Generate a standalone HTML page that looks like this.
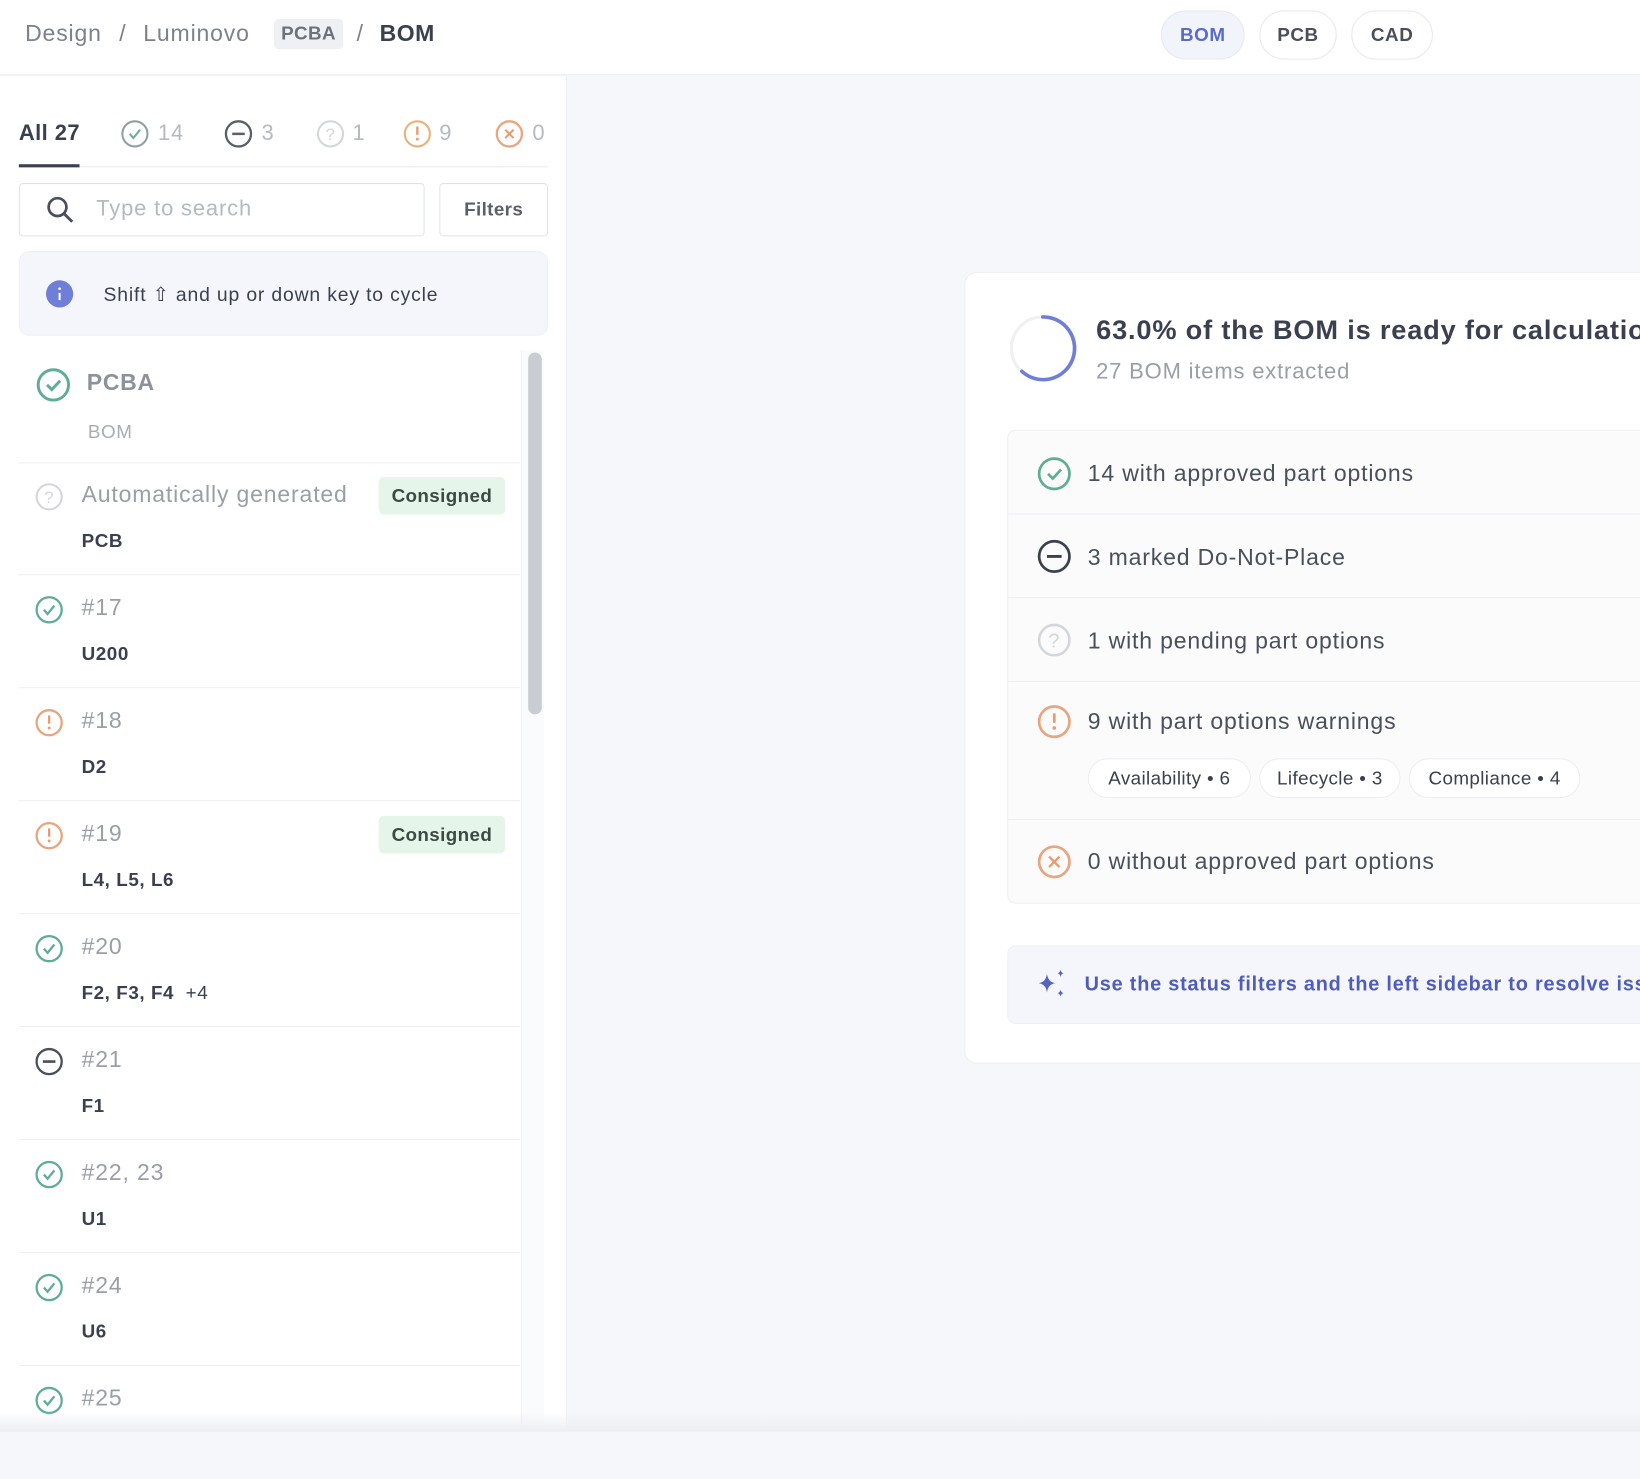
<!DOCTYPE html>
<html><head><meta charset="utf-8"><style>
*{margin:0;padding:0;box-sizing:border-box}
html,body{width:1640px;height:1432px;overflow:hidden;background:#f5f7fb;font-family:"Liberation Sans",sans-serif;letter-spacing:0.05em}
#w{position:absolute;left:0;top:0;width:1568px;height:1369px;transform:scale(1.04592);transform-origin:0 0;background:#f5f7fb}
.a{position:absolute;white-space:nowrap}
.hdr{position:absolute;left:0;top:0;width:1568px;height:72px;background:#fff;border-bottom:1px solid #e9ecf2}
.pill{position:absolute;top:10px;height:47px;border:1px solid #e6e9ef;border-radius:24px;font-size:18px;font-weight:bold;color:#4a4f5c;text-align:center;line-height:45px;background:#fff;letter-spacing:0.03em}
.left{position:absolute;left:0;top:73px;width:542px;height:1296px;background:#fff;border-right:1px solid #eceef3}
.row{position:absolute;left:18px;width:479px;height:108px;border-bottom:1px solid #eef0f4}
.row svg{position:absolute;left:15px;top:19px}
.t{position:absolute;left:60px;top:18px;font-size:22px;color:#9a9ea8}
.s{position:absolute;left:60px;top:65px;font-size:18px;font-weight:bold;color:#3b4050;letter-spacing:0.03em}
.cons{position:absolute;left:344px;top:14px;width:121px;height:36px;background:#e6f5e9;border-radius:5px;font-size:18px;font-weight:bold;color:#3d4a44;text-align:center;line-height:36px;letter-spacing:0.02em}
.ir{position:absolute;left:0;width:100%;border-bottom:1px solid #eceef2}
.ir svg{position:absolute;left:27px}
.it{position:absolute;left:76px;font-size:22px;color:#4a4f5c}
.chip{position:absolute;top:0;height:38px;border:1px solid #eceef2;border-radius:19px;background:#fff;font-size:18px;color:#3b4050;line-height:36px;text-align:center;letter-spacing:0.02em}
</style></head><body><div id="w">
<div class="hdr">
 <div class="a" style="left:24px;top:19px;font-size:22px;color:#7d818d">Design</div>
 <div class="a" style="left:114px;top:19px;font-size:22px;color:#7d818d">/</div>
 <div class="a" style="left:137px;top:19px;font-size:22px;color:#7d818d">Luminovo</div>
 <div class="a" style="left:262px;top:18px;width:66px;height:29px;background:#eef0f3;border-radius:4px;font-size:18px;font-weight:bold;color:#6d717c;text-align:center;line-height:29px;letter-spacing:0.02em">PCBA</div>
 <div class="a" style="left:341px;top:19px;font-size:22px;color:#7d818d">/</div>
 <div class="a" style="left:363px;top:19px;font-size:22px;color:#3b4050;font-weight:bold;letter-spacing:0.02em">BOM</div>
 <div class="pill" style="left:1110px;width:80px;background:#f1f4fa;color:#5a6ac8">BOM</div>
 <div class="pill" style="left:1204px;width:74px">PCB</div>
 <div class="pill" style="left:1292px;width:78px">CAD</div>
</div>
<div class="left">
 <div class="a" style="left:18px;top:43px;font-size:21px;font-weight:bold;color:#3b4050;letter-spacing:0.02em">All 27</div>
 <svg class="a" style="left:115px;top:41px" width="28" height="28" viewBox="-14 -14 28 28"><circle r="12" fill="none" stroke="#8fa2a0" stroke-width="2"/><path d="M-5 0l3.5 4 6.5-8" fill="none" stroke="#6fae97" stroke-width="2"/></svg>
 <div class="a" style="left:151px;top:43px;font-size:21px;color:#b5b9c1">14</div>
 <svg class="a" style="left:214px;top:41px" width="28" height="28" viewBox="-14 -14 28 28"><circle r="12" fill="none" stroke="#5a5f6b" stroke-width="2.2"/><path d="M-6 0h12" stroke="#5a5f6b" stroke-width="2.5"/></svg>
 <div class="a" style="left:250px;top:43px;font-size:21px;color:#b5b9c1">3</div>
 <svg class="a" style="left:302px;top:41px" width="28" height="28" viewBox="-14 -14 28 28"><circle r="12" fill="none" stroke="#d3d6db" stroke-width="2"/><text x="0" y="6" font-size="16" text-anchor="middle" fill="#d3d6db" font-family="Liberation Sans">?</text></svg>
 <div class="a" style="left:337px;top:43px;font-size:21px;color:#b5b9c1">1</div>
 <svg class="a" style="left:385px;top:41px" width="28" height="28" viewBox="-14 -14 28 28"><circle r="12" fill="none" stroke="#e9b27a" stroke-width="2"/><path d="M0-7v8" stroke="#e99a6f" stroke-width="2.2"/><circle cy="5" r="1.4" fill="#e99a6f"/></svg>
 <div class="a" style="left:420px;top:43px;font-size:21px;color:#b5b9c1">9</div>
 <svg class="a" style="left:473px;top:41px" width="28" height="28" viewBox="-14 -14 28 28"><circle r="12" fill="none" stroke="#e9a57f" stroke-width="2.2"/><path d="M-4-4l8 8M4-4l-8 8" stroke="#e99a6f" stroke-width="2"/></svg>
 <div class="a" style="left:509px;top:43px;font-size:21px;color:#b5b9c1">0</div>
 <div class="a" style="left:18px;top:86px;width:506px;height:1px;background:#e9ecf2"></div>
 <div class="a" style="left:18px;top:84px;width:58px;height:3px;background:#3b4050"></div>
 <div class="a" style="left:18px;top:102px;width:388px;height:51px;border:1px solid #dfe3ea;border-radius:4px"></div>
 <svg class="a" style="left:43px;top:113px" width="30" height="30" viewBox="0 0 30 30"><circle cx="12" cy="12" r="8.5" fill="none" stroke="#4a4f5c" stroke-width="2.6"/><path d="M18 18l8 8" stroke="#4a4f5c" stroke-width="2.8"/></svg>
 <div class="a" style="left:92px;top:115px;font-size:21px;color:#b5b9c1">Type to search</div>
 <div class="a" style="left:420px;top:102px;width:104px;height:51px;border:1px solid #dfe3ea;border-radius:4px;font-size:18px;font-weight:bold;color:#5a5f6b;text-align:center;line-height:49px;letter-spacing:0.02em">Filters</div>
 <div class="a" style="left:18px;top:167px;width:506px;height:81px;background:#f4f6fb;border:1px solid #eef0f5;border-radius:10px"></div>
 <svg class="a" style="left:43px;top:194px" width="28" height="28" viewBox="-14 -14 28 28"><circle r="13" fill="#6f7fd8"/><path d="M0-1v7" stroke="#fff" stroke-width="2"/><circle cy="-5" r="1.3" fill="#fff"/></svg>
 <div class="a" style="left:99px;top:198px;font-size:18.5px;color:#3b4050">Shift ⇧ and up or down key to cycle</div>
 <div class="a" style="left:498px;top:262px;width:22px;height:1034px;background:#fafbfc;border-left:1px solid #eef0f3"></div>
 <div class="a" style="left:505px;top:264px;width:13px;height:346px;background:#c9ccd1;border-radius:7px"></div>
 <div style="position:absolute;left:0;top:262px">
  <div class="row" style="top:0">
   <svg style="left:16px;top:16px" width="34" height="34" viewBox="-17 -17 34 34"><circle r="14.5" fill="none" stroke="#5fae93" stroke-width="2.8"/><path d="M-6 0l4.5 4.5 8-8.5" fill="none" stroke="#5fae93" stroke-width="2.8"/></svg>
   <div class="t" style="left:65px;top:18px;font-weight:bold;color:#8d919c;letter-spacing:0.03em">PCBA</div>
   <div class="s" style="left:66px;top:68px;font-weight:normal;color:#a8acb5">BOM</div>
  </div>
  <div class="row" style="top:107px;height:108px">
   <svg width="28" height="28" viewBox="-14 -14 28 28"><circle r="12" fill="none" stroke="#d3d6db" stroke-width="2"/><text x="0" y="6" font-size="16" text-anchor="middle" fill="#d3d6db" font-family="Liberation Sans">?</text></svg>
   <div class="t">Automatically generated</div><div class="cons">Consigned</div>
   <div class="s">PCB</div>
  </div>
  <div class="row" style="top:215px">
   <svg width="28" height="28" viewBox="-14 -14 28 28"><circle r="12" fill="none" stroke="#5fae93" stroke-width="2.2"/><path d="M-5 0l3.5 4 6.5-8" fill="none" stroke="#5fae93" stroke-width="2.2"/></svg>
   <div class="t">#17</div><div class="s">U200</div>
  </div>
  <div class="row" style="top:323px">
   <svg width="28" height="28" viewBox="-14 -14 28 28"><circle r="12" fill="none" stroke="#e9a57f" stroke-width="2.2"/><path d="M0-7v8" stroke="#e99a6f" stroke-width="2.2"/><circle cy="5" r="1.4" fill="#e99a6f"/></svg>
   <div class="t">#18</div><div class="s">D2</div>
  </div>
  <div class="row" style="top:431px">
   <svg width="28" height="28" viewBox="-14 -14 28 28"><circle r="12" fill="none" stroke="#e9a57f" stroke-width="2.2"/><path d="M0-7v8" stroke="#e99a6f" stroke-width="2.2"/><circle cy="5" r="1.4" fill="#e99a6f"/></svg>
   <div class="t">#19</div><div class="cons">Consigned</div><div class="s">L4, L5, L6</div>
  </div>
  <div class="row" style="top:539px">
   <svg width="28" height="28" viewBox="-14 -14 28 28"><circle r="12" fill="none" stroke="#5fae93" stroke-width="2.2"/><path d="M-5 0l3.5 4 6.5-8" fill="none" stroke="#5fae93" stroke-width="2.2"/></svg>
   <div class="t">#20</div><div class="s">F2, F3, F4 &nbsp;<span style="font-weight:normal">+4</span></div>
  </div>
  <div class="row" style="top:647px">
   <svg width="28" height="28" viewBox="-14 -14 28 28"><circle r="12" fill="none" stroke="#4a4f5c" stroke-width="2.2"/><path d="M-6 0h12" stroke="#4a4f5c" stroke-width="2.5"/></svg>
   <div class="t">#21</div><div class="s">F1</div>
  </div>
  <div class="row" style="top:755px">
   <svg width="28" height="28" viewBox="-14 -14 28 28"><circle r="12" fill="none" stroke="#5fae93" stroke-width="2.2"/><path d="M-5 0l3.5 4 6.5-8" fill="none" stroke="#5fae93" stroke-width="2.2"/></svg>
   <div class="t">#22, 23</div><div class="s">U1</div>
  </div>
  <div class="row" style="top:863px">
   <svg width="28" height="28" viewBox="-14 -14 28 28"><circle r="12" fill="none" stroke="#5fae93" stroke-width="2.2"/><path d="M-5 0l3.5 4 6.5-8" fill="none" stroke="#5fae93" stroke-width="2.2"/></svg>
   <div class="t">#24</div><div class="s">U6</div>
  </div>
  <div class="row" style="top:971px;border:none">
   <svg width="28" height="28" viewBox="-14 -14 28 28"><circle r="12" fill="none" stroke="#5fae93" stroke-width="2.2"/><path d="M-5 0l3.5 4 6.5-8" fill="none" stroke="#5fae93" stroke-width="2.2"/></svg>
   <div class="t">#25</div>
  </div>
 </div>
</div>
<div class="a" style="left:0;top:1350px;width:1568px;height:19px;background:linear-gradient(#f7f8fa00,#eceef2)"></div>
<div class="a" style="left:922px;top:260px;width:700px;height:757px;background:#fff;border:1px solid #eef0f4;border-radius:12px">
 <svg class="a" style="left:40px;top:38px" width="68" height="68" viewBox="-34 -34 68 68"><circle r="30" fill="none" stroke="#eef0f4" stroke-width="3"/><path d="M0-30A30 30 0 1 1-20 22" fill="none" stroke="#6f7fd8" stroke-width="3.5" stroke-linecap="round"/></svg>
 <div class="a" style="left:125px;top:39px;font-size:26px;font-weight:bold;color:#3b4050;letter-spacing:0.03em">63.0% of the BOM is ready for calculation</div>
 <div class="a" style="left:125px;top:83px;font-size:21px;color:#9a9ea8">27 BOM items extracted</div>
 <div class="a" style="left:40px;top:150px;width:680px;height:453px;background:#fbfbfc;border:1px solid #eceef2;border-radius:8px">
  <div class="ir" style="top:0;height:80px"><svg style="top:24px" width="34" height="34" viewBox="-17 -17 34 34"><circle r="14.5" fill="none" stroke="#5fae93" stroke-width="2.6"/><path d="M-6 0l4.5 4.5 8-8.5" fill="none" stroke="#5fae93" stroke-width="2.6"/></svg><div class="it" style="top:28px">14 with approved part options</div></div>
  <div class="ir" style="top:80px;height:80px"><svg style="top:23px" width="34" height="34" viewBox="-17 -17 34 34"><circle r="14.5" fill="none" stroke="#3b4050" stroke-width="2.6"/><path d="M-7 0h14" stroke="#3b4050" stroke-width="2.8"/></svg><div class="it" style="top:28px">3 marked Do-Not-Place</div></div>
  <div class="ir" style="top:160px;height:80px"><svg style="top:23px" width="34" height="34" viewBox="-17 -17 34 34"><circle r="14.5" fill="none" stroke="#d3d6db" stroke-width="2.4"/><text x="0" y="7" font-size="19" text-anchor="middle" fill="#d3d6db" font-family="Liberation Sans">?</text></svg><div class="it" style="top:28px">1 with pending part options</div></div>
  <div class="ir" style="top:240px;height:132px"><svg style="top:21px" width="34" height="34" viewBox="-17 -17 34 34"><circle r="14.5" fill="none" stroke="#e9a57f" stroke-width="2.6"/><path d="M0-8v9" stroke="#e99a6f" stroke-width="2.6"/><circle cy="6" r="1.7" fill="#e99a6f"/></svg><div class="it" style="top:25px">9 with part options warnings</div>
   <div class="a" style="left:76px;top:73px;height:38px;width:480px">
    <div class="chip" style="left:0;width:156px">Availability • 6</div>
    <div class="chip" style="left:164px;width:135px">Lifecycle • 3</div>
    <div class="chip" style="left:307px;width:164px">Compliance • 4</div>
   </div></div>
  <div class="ir" style="top:372px;height:80px;border:none"><svg style="top:23px" width="34" height="34" viewBox="-17 -17 34 34"><circle r="14.5" fill="none" stroke="#e9a57f" stroke-width="2.6"/><path d="M-5-5l10 10M5-5l-10 10" stroke="#e99a6f" stroke-width="2.2"/></svg><div class="it" style="top:27px">0 without approved part options</div></div>
 </div>
 <div class="a" style="left:40px;top:643px;width:680px;height:75px;background:#f4f6fb;border:1px solid #eef0f5;border-radius:8px">
  <svg class="a" style="left:26px;top:20px" width="32" height="32" viewBox="0 0 32 32"><path d="M11 6Q12 14 19 15Q12 16 11 24Q10 16 3 15Q10 14 11 6Z" fill="#5563c1"/><path d="M24 2Q24.5 5 27 5.5Q24.5 6 24 9Q23.5 6 21 5.5Q23.5 5 24 2Z" fill="#5563c1"/><path d="M24 21Q24.5 24 27 24.5Q24.5 25 24 28Q23.5 25 21 24.5Q23.5 24 24 21Z" fill="#5563c1"/></svg>
  <div class="a" style="left:73px;top:26px;font-size:19px;font-weight:bold;color:#4f5db8;letter-spacing:0.04em">Use the status filters and the left sidebar to resolve issues</div>
 </div>
</div>
</div></body></html>
